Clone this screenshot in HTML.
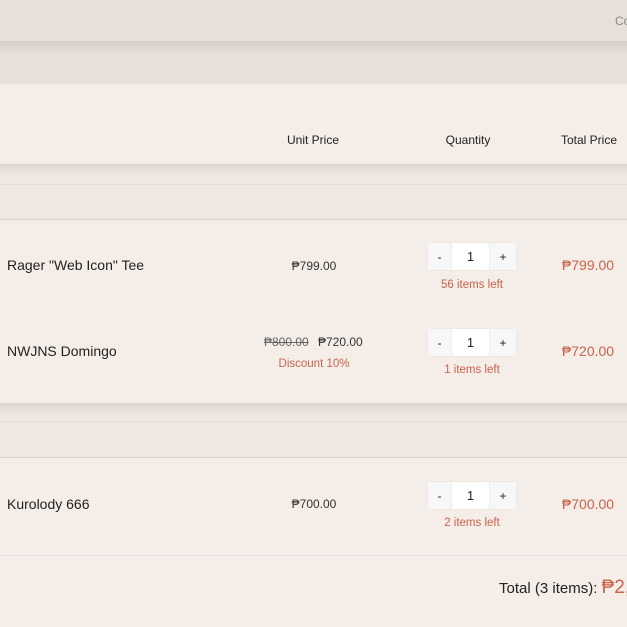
<!DOCTYPE html>
<html><head><meta charset="utf-8"><style>
*{margin:0;padding:0;box-sizing:border-box}
body{width:627px;height:627px;overflow:hidden;background:#f5ede7;font-family:"Liberation Sans",sans-serif;color:#222;position:relative}
.a{position:absolute}
.t{position:absolute;white-space:nowrap}
.red{color:#c8644a}
.q{position:absolute;width:88px;height:27px;border-radius:3px;display:flex;box-shadow:0 0 1px rgba(0,0,0,.15)}
.q div{display:flex;align-items:center;justify-content:center;font-size:12px}
.q .b{width:23px;background:#f6f7f8}
.q .i{width:39px;background:#fff;border-left:1px solid #eceeef;border-right:1px solid #eceeef;font-size:13px}
.q .b2{width:26px;background:#f6f7f8}
.c{transform:translateX(-50%);text-align:center}
</style></head><body>
<div class="a" style="left:0;top:0;width:627px;height:84px;background:#e6dfda"></div>
<div class="a" style="left:0;top:41px;width:627px;height:12px;background:linear-gradient(#d5cdc7,#e6dfda)"></div>
<div class="t" style="left:615px;top:14px;font-size:12px;color:#888">Co</div>
<div class="a" style="left:0;top:120px;width:627px;height:44px;background:#f5ede7;box-shadow:0 1px 2px rgba(0,0,0,.08)"></div>
<div class="t c" style="left:313px;top:133px;font-size:12px">Unit Price</div>
<div class="t c" style="left:468px;top:133px;font-size:12px">Quantity</div>
<div class="t c" style="left:589px;top:133px;font-size:12px">Total Price</div>
<div class="a" style="left:0;top:164px;width:627px;height:56px;background:#f0e7e1"></div>
<div class="a" style="left:0;top:164px;width:627px;height:12px;background:linear-gradient(#dcd4ce,#f0e7e1)"></div>
<div class="a" style="left:0;top:184px;width:627px;height:1px;background:#e6dfda"></div>
<div class="a" style="left:0;top:219px;width:627px;height:1px;background:#d8d0cb"></div>

<div class="t" style="left:7px;top:257px;font-size:14px">Rager "Web Icon" Tee</div>
<div class="t c" style="left:314px;top:259px;font-size:12px;color:#333">₱799.00</div>
<div class="q" style="left:428px;top:243px"><div class="b">-</div><div class="i">1</div><div class="b2">+</div></div>
<div class="t c red" style="left:472px;top:279px;font-size:11.5px">56 items left</div>
<div class="t c red" style="left:588px;top:257px;font-size:14px">₱799.00</div>

<div class="t" style="left:7px;top:343px;font-size:14px">NWJNS Domingo</div>
<div class="t" style="left:264px;top:335px;font-size:12px;color:#666;text-decoration:line-through">₱800.00</div>
<div class="t" style="left:318px;top:335px;font-size:12px;color:#333">₱720.00</div>
<div class="t c red" style="left:314px;top:358px;font-size:11.5px">Discount 10%</div>
<div class="q" style="left:428px;top:329px"><div class="b">-</div><div class="i">1</div><div class="b2">+</div></div>
<div class="t c red" style="left:472px;top:364px;font-size:11.5px">1 items left</div>
<div class="t c red" style="left:588px;top:343px;font-size:14px">₱720.00</div>

<div class="a" style="left:0;top:403px;width:627px;height:55px;background:#f0e7e1"></div>
<div class="a" style="left:0;top:403px;width:627px;height:12px;background:linear-gradient(#dcd4ce,#f0e7e1)"></div>
<div class="a" style="left:0;top:421px;width:627px;height:1px;background:#e6dfda"></div>
<div class="a" style="left:0;top:457px;width:627px;height:1px;background:#d8d0cb"></div>

<div class="t" style="left:7px;top:496px;font-size:14px">Kurolody 666</div>
<div class="t c" style="left:314px;top:497px;font-size:12px;color:#333">₱700.00</div>
<div class="q" style="left:428px;top:482px"><div class="b">-</div><div class="i">1</div><div class="b2">+</div></div>
<div class="t c red" style="left:472px;top:517px;font-size:11.5px">2 items left</div>
<div class="t c red" style="left:588px;top:496px;font-size:14px">₱700.00</div>
<div class="a" style="left:0;top:555px;width:627px;height:1px;background:#dcdfe3"></div>
<div class="t" style="left:499px;top:577px;font-size:15px">Total (3 items): <span class="red" style="font-size:19px">₱2,</span></div>
</body></html>
